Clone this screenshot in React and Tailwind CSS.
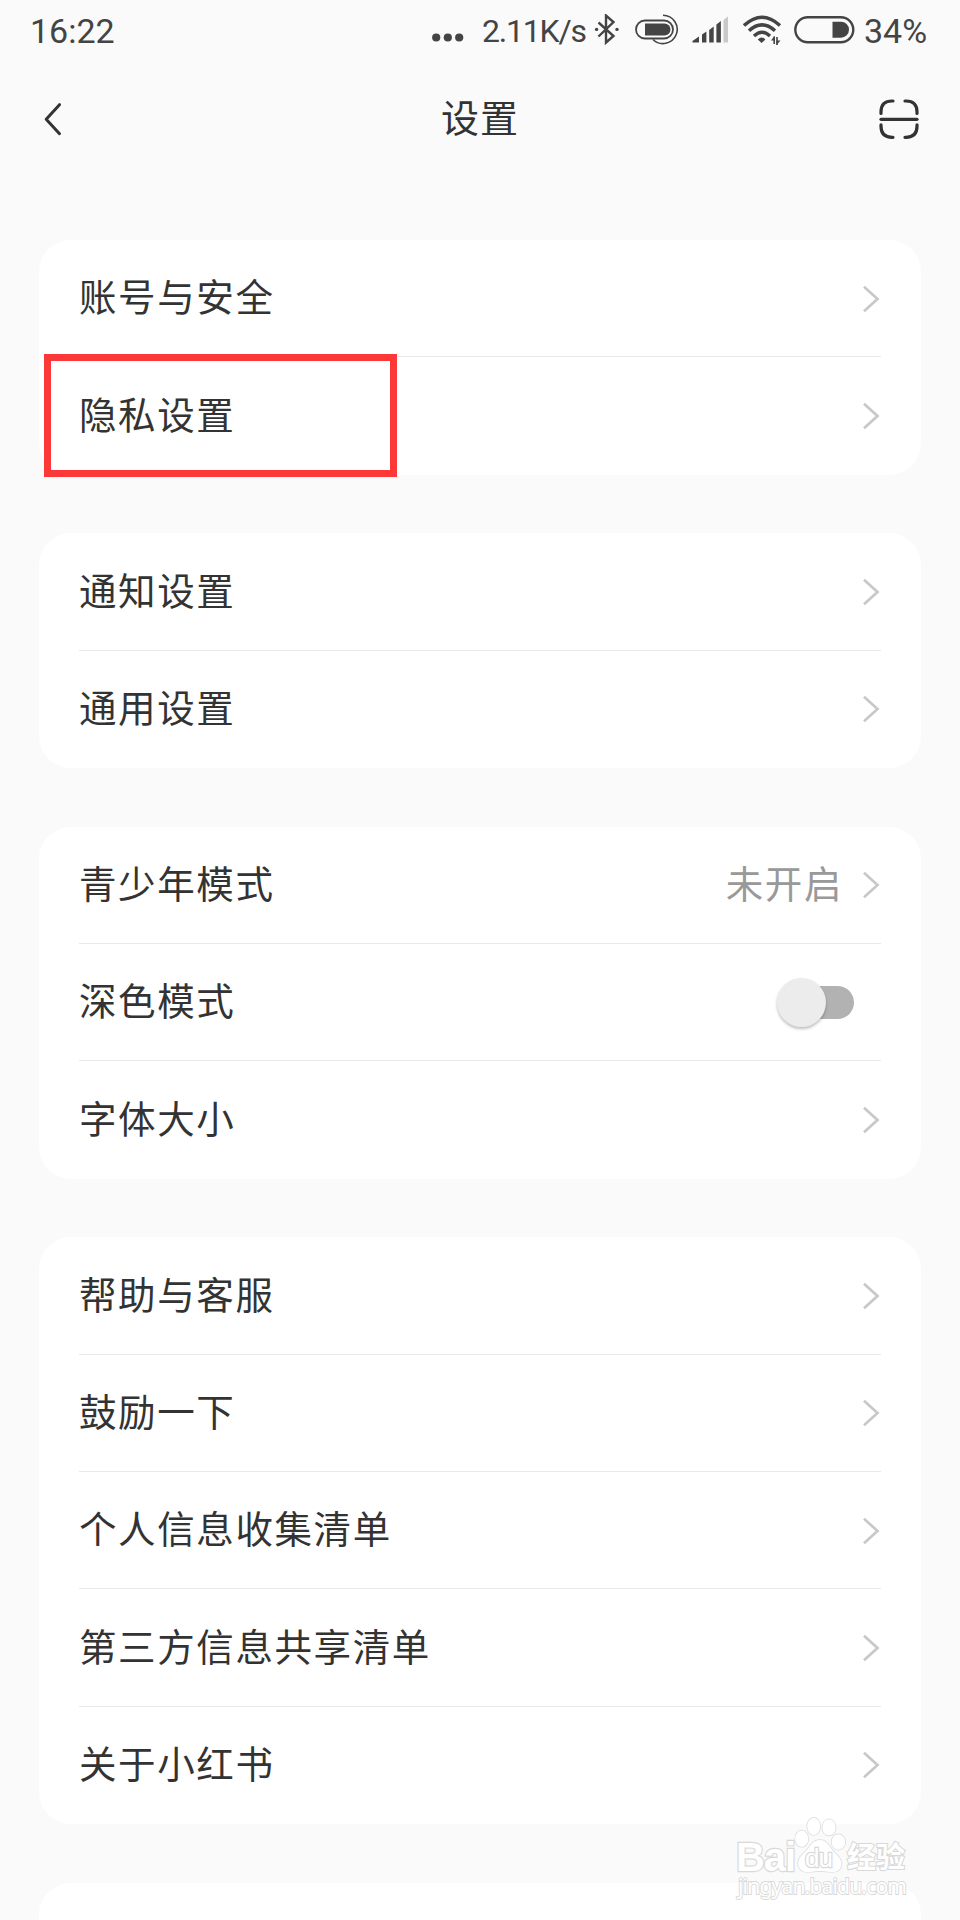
const groups = [
  [{ label: '账号与安全' }, { label: '隐私设置', highlighted: true }],
  [{ label: '通知设置' }, { label: '通用设置' }],
  [{ label: '青少年模式', value: '未开启' }, { label: '深色模式', toggle: true }, { label: '字体大小' }],
  [
    { label: '帮助与客服' },
    { label: '鼓励一下' },
    { label: '个人信息收集清单' },
    { label: '第三方信息共享清单' },
    { label: '关于小红书' },
  ],
];

const StatusBar = () => (
  <div className="flex h-[60px] items-center pl-[30px] pr-[31px] font-['Roboto',sans-serif] text-[34px] leading-none text-[#444]">
    <span className="mt-px">16:22</span>
    <div className="ml-auto flex items-center">
      <svg className="mr-[18px] mt-[15px]" width="32" height="9" viewBox="0 0 32 9" fill="currentColor">
        <circle cx="4.2" cy="4.5" r="4.1" />
        <circle cx="15.8" cy="4.5" r="4.1" />
        <circle cx="27.2" cy="4.5" r="4.1" />
      </svg>
      <span className="mt-px w-[104px] whitespace-nowrap text-[32px] tracking-[-1.2px]">2.11K/s</span>
      {/* Bluetooth */}
      <svg className="ml-2" width="26" height="32" viewBox="0 0 26 32" fill="none" stroke="currentColor" strokeWidth="2.4">
        <path d="M4.5 8.5 L19.5 22 L12 28.5 V1.5 L19.5 8 L4.5 22.5" />
        <circle cx="2.6" cy="15.4" r="1.7" fill="currentColor" stroke="none" />
        <circle cx="23" cy="15.4" r="1.7" fill="currentColor" stroke="none" />
      </svg>
      {/* Device battery */}
      <svg className="ml-[15px]" width="44" height="32" viewBox="0 0 44 32" fill="none" stroke="currentColor">
        <rect x="1" y="6.5" width="37" height="18" rx="9" strokeWidth="1.8" />
        <path d="M10 9.5 H29.5 A6 6 0 0 1 29.5 21.5 H10 Z" fill="currentColor" stroke="none" />
        <path d="M28 1.2 A14.2 14.2 0 1 1 18 25.5" strokeWidth="1.6" />
      </svg>
      {/* Signal */}
      <svg className="ml-[13px]" width="37" height="28" viewBox="0 0 37 28" fill="currentColor">
        <path d="M0.5 26.5 V25 L7 20.5 V26.5 Z" />
        <path d="M10 26.5 V18.5 L14.4 15.5 V26.5 Z" />
        <path d="M17.2 26.5 V14 L21.7 10.5 V26.5 Z" />
        <path d="M24.4 26.5 V8.5 L28.9 5 V26.5 Z" />
        <path d="M31.5 26.5 V4 L36 0.5 V26.5 Z" fill="#c9c9c9" />
      </svg>
      {/* Wifi */}
      <svg className="ml-[14px]" width="39" height="32" viewBox="0 0 39 32" fill="none" stroke="currentColor" strokeWidth="3.4">
        <path d="M1 11.5 Q19 -5 37 11.5" />
        <path d="M6 16.8 Q19 5 32 16.8" />
        <path d="M11 22 Q19 14.5 27 22" />
        <path d="M14.8 25.5 Q18.6 21.5 22.4 25.5 L18.6 29 Z" fill="currentColor" stroke="none" />
        <path d="M31.2 22.5 V30 M34 31 V23" strokeWidth="1.6" />
        <path d="M28 26.5 L31.5 22 V26.5 Z M33.5 31 L37.5 26.5 H33.5 Z" fill="currentColor" stroke="none" />
      </svg>
      {/* Phone battery */}
      <svg className="ml-[12px]" width="61" height="28" viewBox="0 0 61 28" fill="none" stroke="currentColor">
        <rect x="1.3" y="1.2" width="58" height="25" rx="12.5" strokeWidth="2.4" />
        <path d="M38.5 5.7 H47 A8 8 0 0 1 47 21.7 H38.5 Z" fill="currentColor" stroke="none" />
      </svg>
      <span className="ml-[9px] mt-px w-[65px] whitespace-nowrap text-[34px]">34%</span>
    </div>
  </div>
);

const Header = () => (
  <div className="flex h-[118px] items-center justify-between px-[41px] text-[#333]">
    <svg width="40" height="40" viewBox="0 0 40 40" fill="none" stroke="currentColor" strokeWidth="3" strokeLinecap="round" strokeLinejoin="round">
      <path d="M18.5 5.7 L5.2 20.2 L18.5 34.7" />
    </svg>
    <h1 className="-mt-[6px] text-[38px] leading-none tracking-[1px]">设置</h1>
    <svg width="40" height="40" viewBox="0 0 40 40" fill="none" stroke="currentColor" strokeWidth="3.2" strokeLinecap="round">
      <path d="M14 2 H13 Q2 2 2 13 V14.5" />
      <path d="M26 2 H27 Q38 2 38 13 V14.5" />
      <path d="M2 25.8 V27.3 Q2 38.3 13 38.3 H14" />
      <path d="M38 25.8 V27.3 Q38 38.3 27 38.3 H26" />
      <path d="M2 20.3 H38" />
    </svg>
  </div>
);

const Chevron = () => (
  <svg className="mr-px mt-px" width="17" height="28" viewBox="0 0 17 28" fill="none" stroke="#c8c8c8" strokeWidth="2.7">
    <path d="M1 1.8 L14.5 14 L1 26.2" />
  </svg>
);

const Toggle = () => (
  <div className="relative mr-[27px] h-[33px] w-[74px] rounded-full bg-[#b2b2b2]">
    <div className="absolute -left-[3px] -top-[8px] size-[49px] rounded-full bg-[#ececec] shadow-[0_2px_3px_rgba(0,0,0,0.25)]" />
  </div>
);

const Row = ({ item, last }) => (
  <div className="relative px-10">
    <div className={`flex h-[117.333px] items-center justify-between border-b ${last ? 'border-transparent' : 'border-[#e9e9e9]'}`}>
      <span className="-mt-[6px] text-[37.5px] leading-none tracking-[1.6px]">{item.label}</span>
      {item.toggle ? (
        <Toggle />
      ) : (
        <div className="flex items-center">
          {item.value && (
            <span className="-mt-[6px] mr-[20px] text-[37.5px] leading-none tracking-[1.6px] text-[#999]">{item.value}</span>
          )}
          <Chevron />
        </div>
      )}
    </div>
    {item.highlighted && (
      <div className="absolute left-[5px] top-[-3px] h-[123px] w-[353px] border-[7px] border-[#fc3838]" />
    )}
  </div>
);

const Watermark = () => (
  <div className="absolute left-[734px] top-[1814px] h-[100px] w-[180px]">
    <svg width="180" height="100" viewBox="0 0 180 100" fill="#fff" stroke="#d9d9d9" strokeWidth="1.4" paintOrder="stroke">
      <text x="2" y="57" fontSize="40" fontWeight="700" fontFamily="Liberation Sans, sans-serif" textLength="60" strokeWidth="2.4">Bai</text>
      <ellipse cx="67.7" cy="24.7" rx="6.6" ry="8.2" />
      <ellipse cx="79.7" cy="12.4" rx="6.5" ry="8.7" />
      <ellipse cx="95" cy="13.4" rx="6.7" ry="8.2" />
      <ellipse cx="104.4" cy="28" rx="6.8" ry="7.7" />
      <path d="M86 26 C78 26 76 33 70 39 C64 44 62 51 67 56 C72 60 79 57 86 57 C93 57 100 60 105 56 C110 51 107 44 101 39 C95 33 94 26 86 26 Z" />
      <text x="71" y="53" fontSize="26" fontFamily="Liberation Sans, sans-serif" textLength="28" strokeWidth="2.4">du</text>
      <text x="113" y="54" fontSize="29" fontWeight="700" fontFamily="Noto Sans CJK SC, sans-serif" textLength="58" strokeWidth="2.2">经验</text>
      <text x="4" y="80" fontSize="21" fontFamily="Noto Sans, sans-serif" textLength="169" strokeWidth="1.8">jingyan.baidu.com</text>
    </svg>
  </div>
);

const App = () => {
  return (
    <div className="relative h-[1920px] w-[960px] overflow-hidden bg-[#fafafa] font-['Noto_Sans_CJK_SC',sans-serif] text-[#333]">
      <StatusBar />
      <Header />
      <div className="mt-[62px] flex flex-col gap-[58.667px] px-[39px]">
        {groups.map((items) => (
          <div key={items[0].label} className="rounded-[32px] bg-white">
            {items.map((item, i) => (
              <Row key={item.label} item={item} last={i === items.length - 1} />
            ))}
          </div>
        ))}
        <div className="h-[117px] rounded-[32px] bg-white" />
      </div>
      <Watermark />
    </div>
  );
};

export default App;
